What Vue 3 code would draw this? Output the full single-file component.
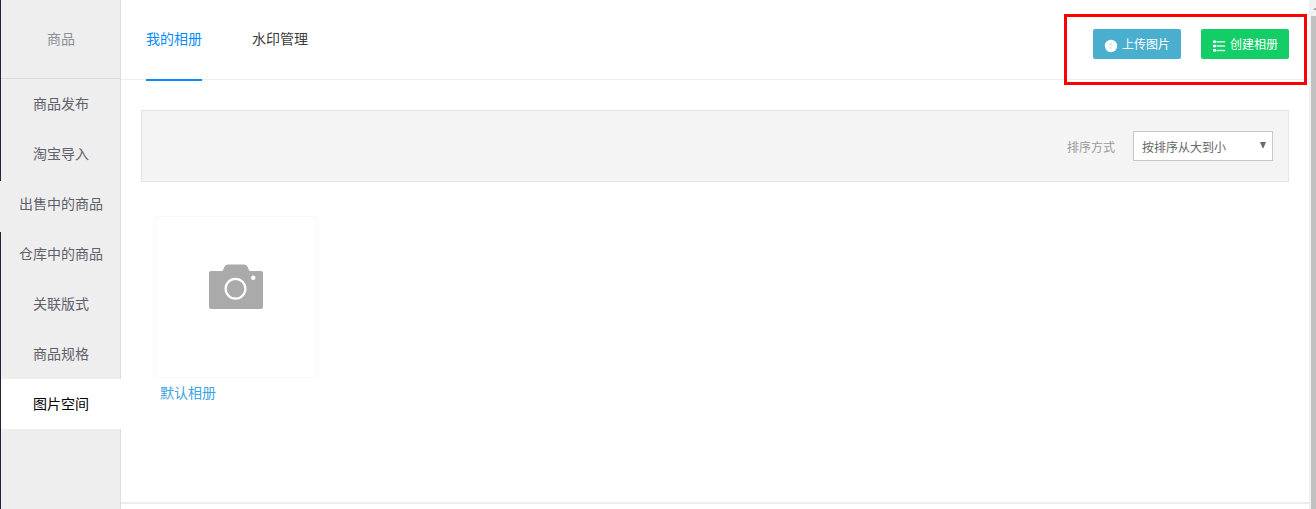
<template>
    <div class="page">
        <div class="edge">
            <span class="edge-gap"></span>
        </div>

        <aside class="sidebar">
            <div class="sidebar-title">商品</div>
            <a
                v-for="item in menus"
                :key="item"
                class="menu-item"
                :class="{ active: item === activeMenu }"
                @click="activeMenu = item"
            >{{ item }}</a>
        </aside>

        <main class="main">
            <header class="header">
                <nav class="tabs">
                    <a
                        v-for="tab in tabs"
                        :key="tab"
                        class="tab"
                        :class="{ active: tab === activeTab }"
                        @click="activeTab = tab"
                    >{{ tab }}</a>
                </nav>

                <div class="actions">
                    <button class="btn upload">
                        <svg class="btn-icon" viewBox="0 0 14 14">
                            <circle cx="7" cy="7" r="6.2" fill="#fff" />
                            <path d="M7 10.2V4.2M4.9 6.2L7 4.1l2.1 2.1" fill="none" stroke="#c3e3ef" stroke-width="0.9" />
                        </svg>
                        <span>上传图片</span>
                    </button>
                    <button class="btn create">
                        <svg class="btn-icon" viewBox="0 0 14 14">
                            <path d="M1 1.500h3v2.500H1zM1 5.800h3v2.500H1zM1 10h3v2.500H1z" fill="#fff" />
                            <path d="M4.500 2.700H13.200M4.500 7H13.200M4.500 11.400H13.200" stroke="#dcf8e8" stroke-width="1.500" />
                        </svg>
                        <span>创建相册</span>
                    </button>
                </div>
            </header>

            <section class="filter">
                <span class="filter-label">排序方式</span>
                <div class="select">
                    <span>按排序从大到小</span>
                    <svg class="arrow" viewBox="0 0 6 6">
                        <path d="M0 0h6L3.500 6h-1z" fill="#6b6b6b" />
                    </svg>
                </div>
            </section>

            <section class="albums">
                <div class="album">
                    <div class="cover">
                        <svg class="camera" viewBox="0 0 54 45">
                            <path d="M2 7h11.500l2-4.300Q16.500 .5 19 .5h16q2.500 0 3.500 2.200l2 4.300H52q2 0 2 2V43q0 2-2 2H2q-2 0-2-2V9q0-2 2-2z" fill="#aaa" />
                            <circle cx="26.500" cy="24.700" r="9.900" fill="none" stroke="#fff" stroke-width="2.200" />
                            <circle cx="44.200" cy="13.700" r="2.200" fill="#fff" />
                        </svg>
                    </div>
                    <a class="album-name">默认相册</a>
                </div>
            </section>

            <footer class="footer"></footer>
        </main>

        <div class="scrollbar">
            <svg class="scroll-arrow" viewBox="0 0 5 3">
                <path d="M0 3L3 0h2v3z" fill="#a3a3a3" />
            </svg>
            <span class="thumb"></span>
        </div>

        <!-- 操作按钮标注框 -->
        <div class="marker"></div>
    </div>
</template>

<script setup>
import { ref } from 'vue'

const menus = ['商品发布', '淘宝导入', '出售中的商品', '仓库中的商品', '关联版式', '商品规格', '图片空间']
const tabs = ['我的相册', '水印管理']

const activeMenu = ref('图片空间')
const activeTab = ref('我的相册')
</script>

<style>
body {
    margin: 0;
    overflow: hidden;
}
</style>

<style scoped>
.page {
    position: relative;
    display: flex;
    height: 509px;
    overflow: hidden;
    background: #fff;
    font-family: "Noto Sans CJK SC", sans-serif;
    font-size: 14px;
    font-weight: 400;
}

.page * {
    box-sizing: border-box;
}

.edge {
    width: 1px;
    flex: none;
    padding-top: 181px;
    background: #23233a;
}

.edge-gap {
    display: block;
    height: 51px;
    background: #eee;
}

.sidebar {
    width: 120px;
    flex: none;
    background: #eee;
    border-right: 1px solid #dcdcdc;
}

.sidebar-title {
    height: 79px;
    padding-left: 1px;
    line-height: 77px;
    border-bottom: 1px solid #dcdcdc;
    text-align: center;
    color: #8c8f99;
}

.menu-item {
    display: block;
    height: 50px;
    padding-left: 1px;
    line-height: 49px;
    text-align: center;
    color: #5f606b;
    cursor: pointer;
}

.menu-item.active {
    margin-right: -1px;
    padding-right: 1px;
    background: #fff;
    color: #000;
}

.main {
    flex: 1;
    min-width: 0;
    display: flex;
    flex-direction: column;
}

.header {
    height: 80px;
    flex: none;
    display: flex;
    justify-content: space-between;
    padding: 0 20px 0 25px;
    border-bottom: 1px solid #eee;
}

.tabs {
    display: flex;
    gap: 50px;
}

.tab {
    height: 81px;
    line-height: 77px;
    color: #3c3c3c;
    cursor: pointer;
}

.tab.active {
    border-bottom: 2px solid #0a8cff;
    color: #0a8cff;
}

.actions {
    display: flex;
    gap: 20px;
    padding-top: 29px;
}

.btn {
    display: flex;
    align-items: center;
    gap: 4px;
    width: 88px;
    height: 30px;
    padding: 0 0 0 11px;
    border: 0;
    border-radius: 2px;
    color: #fff;
    font-family: inherit;
    font-size: 12px;
    line-height: 30px;
    white-space: nowrap;
    cursor: pointer;
}

.btn span {
    height: 30px;
}

.btn-icon {
    width: 14px;
    height: 14px;
    flex: none;
    margin-top: 3px;
}

.upload {
    background: #4aaece;
}

.create {
    background: #13ce66;
}

.filter {
    height: 72px;
    flex: none;
    display: flex;
    align-items: center;
    justify-content: flex-end;
    gap: 18px;
    margin: 30px 20px 0;
    padding-right: 15px;
    background: #f4f4f4;
    border: 1px solid #e4e4e4;
    font-size: 12px;
}

.filter-label {
    color: #999;
}

.select {
    display: flex;
    align-items: center;
    justify-content: space-between;
    width: 140px;
    height: 30px;
    padding: 0 6px 0 8px;
    background: #fff;
    border: 1px solid #c8c8c8;
    color: #666;
}

.arrow {
    width: 6px;
    height: 6px;
    margin-bottom: 2px;
}

.albums {
    flex: 1;
    padding: 34px 34px 0;
}

.album {
    width: 162px;
}

.cover {
    height: 162px;
    padding: 47px 0 0 53px;
    border: 1px solid #f8f8f8;
}

.camera {
    display: block;
    width: 54px;
    height: 45px;
}

.album-name {
    display: block;
    padding-left: 5px;
    line-height: 29px;
    color: #3ca4e2;
}

.footer {
    height: 7px;
    flex: none;
    border-top: 2px solid #ececec;
}

.scrollbar {
    width: 7px;
    flex: none;
    display: flex;
    flex-direction: column;
    align-items: flex-end;
    background: #f1f1f1;
}

.scroll-arrow {
    width: 3px;
    height: 2px;
    margin: 8px 0 6px;
}

.thumb {
    width: 5px;
    flex: 1;
    background: #c1c1c1;
}

.marker {
    position: absolute;
    top: 14px;
    left: 1064px;
    width: 243px;
    height: 71px;
    border: 3px solid #f00;
    pointer-events: none;
}
</style>
